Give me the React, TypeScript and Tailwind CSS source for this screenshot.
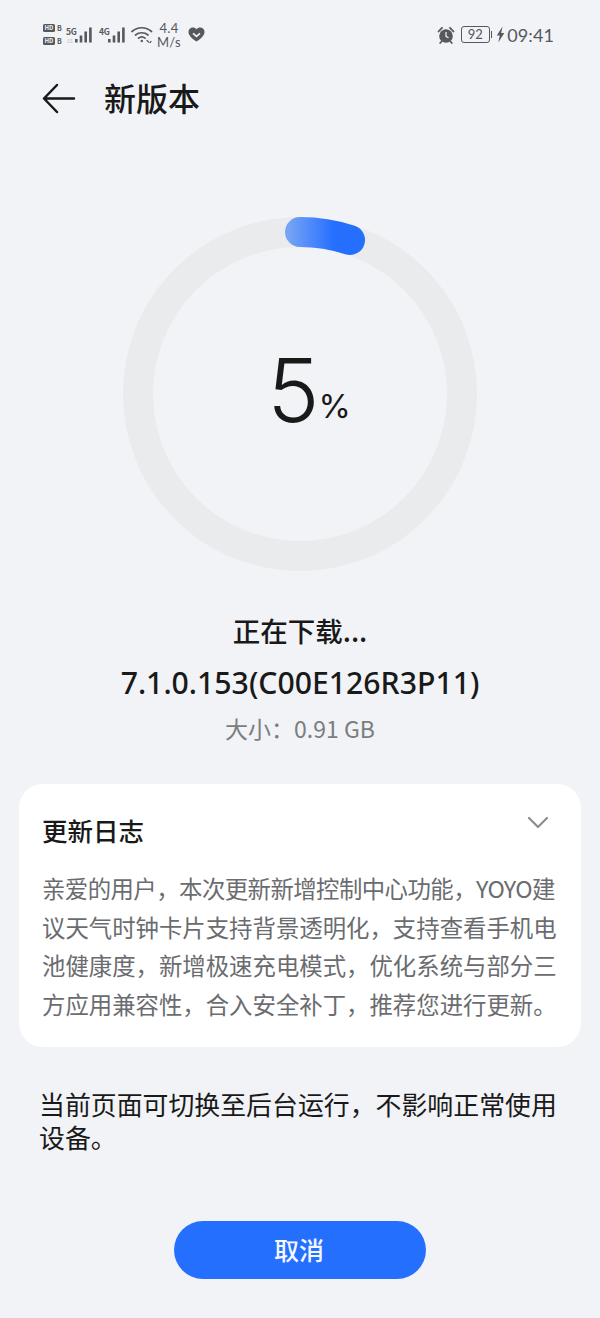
const font = "font-['Noto_Sans_CJK_SC','Noto_Sans',sans-serif]";

function Bars() {
  return (
    <g fill="#55585c">
      <rect x={0} y={12} width={2.6} height={3.5} />
      <rect x={4.7} y={8.5} width={2.6} height={7} />
      <rect x={9.4} y={4.5} width={2.6} height={11} />
      <rect x={14.1} y={0.5} width={2.6} height={15} />
    </g>
  );
}

function HdLine() {
  return (
    <div className="flex items-center gap-[2px]">
      <span className="flex h-[8px] w-[12px] items-center justify-center rounded-[1.5px] bg-[#55585c] text-[6px] leading-none font-bold text-[#f1f3f7]">
        HD
      </span>
      <span className="text-[7px] leading-none font-bold text-[#55585c]">B</span>
    </div>
  );
}

function StatusBar() {
  return (
    <div className="flex h-[69px] items-center justify-between pr-[46px] pl-[43px] text-[#55585c]">
      <div className="flex items-center">
        <div className="flex w-[20px] flex-col gap-[5px]">
          <HdLine />
          <HdLine />
        </div>
        <div className="relative ml-[3px] h-[16px] w-[27px]">
          <span className="absolute top-0 left-0 text-[8.5px] leading-none font-bold tracking-[-0.3px]">5G</span>
          <span className="absolute top-[11px] left-[1px] text-[5px] leading-none text-[#b5b7ba]">1S</span>
          <svg className="absolute top-0 left-[9px]" width="17" height="16" viewBox="0 0 17 16">
            <Bars />
          </svg>
        </div>
        <div className="relative ml-[6px] h-[16px] w-[27px]">
          <span className="absolute top-0 left-0 text-[8.5px] leading-none font-bold tracking-[-0.3px]">4G</span>
          <svg className="absolute top-0 left-[9px]" width="17" height="16" viewBox="0 0 17 16">
            <Bars />
          </svg>
        </div>
        <svg className="ml-[5px]" width="22" height="18" viewBox="0 0 22 18" fill="none" stroke="#55585c" strokeWidth="1.7" strokeLinecap="round">
          <path d="M1 5.5C6.5 0.5 15 0.5 20.5 5.5" />
          <path d="M4.5 9C8 6 13.5 6 17 9" />
          <path d="M7.5 12.2C9.5 10.6 12 10.6 14 12.2" />
          <circle cx="10.8" cy="15" r="1.2" fill="#55585c" stroke="none" />
          <path d="M16 14.5l1.5 1.5M19 16.5l1 -1" strokeWidth="1.2" />
        </svg>
        <div className="ml-[4px] flex w-[24px] flex-col items-center font-['Lato',sans-serif] text-[13px] leading-[14px] tracking-[0.3px]">
          <span>4.4</span>
          <span>M/s</span>
        </div>
        <svg className="ml-[7px]" width="17" height="15" viewBox="0 0 17 15">
          <path d="M8.5 14.5C3 11 0.5 8 0.5 4.8 0.5 2.2 2.5 0.5 4.8 0.5c1.5 0 2.8 0.6 3.7 1.8C9.4 1.100 10.700 0.5 12.200 0.5c2.300 0 4.300 1.700 4.300 4.300 0 3.200-2.500 6.200-8 9.700z" fill="#55585c" />
          <path d="M5 6.300l3.500 3 3.500-3" fill="none" stroke="#f1f3f7" strokeWidth="1.700" />
        </svg>
      </div>
      <div className="flex items-center">
        <svg width="18" height="18" viewBox="0 0 18 18">
          <circle cx="9" cy="10" r="6.800" fill="#55585c" />
          <path d="M1.500 5.500L5 1.800M16.500 5.500L13 1.800M4.500 15.500L3.200 17M13.500 15.500L14.800 17" stroke="#55585c" strokeWidth="1.800" strokeLinecap="round" />
          <path d="M9 6v4.300l2.500 1.500" fill="none" stroke="#f1f3f7" strokeWidth="1.200" />
        </svg>
        <div className="ml-[6px] flex h-[17px] w-[29px] items-center justify-center rounded-[3px] border border-[#55585c] font-['Lato',sans-serif] text-[13px] leading-none">
          92
        </div>
        <div className="ml-[1px] h-[7px] w-[1.500px] bg-[#55585c]" />
        <svg className="ml-[4px]" width="9" height="17" viewBox="0 0 9 17">
          <path d="M6.500 0.500L0.800 9.500H3.800L2.300 16.500L8.300 7H5.200Z" fill="#55585c" />
        </svg>
        <span className="ml-[2px] font-['Lato',sans-serif] text-[18px] leading-none tracking-[0.1px]">09:41</span>
      </div>
    </div>
  );
}

function ProgressRing() {
  return (
    <div className="relative mx-auto h-[356px] w-[356px]">
      <svg width="356" height="356" viewBox="0 0 356 356" fill="none">
        <defs>
          <linearGradient id="arc" gradientUnits="userSpaceOnUse" x1="162" y1="0" x2="212" y2="0">
            <stop offset="0" stopColor="#7ea8f4" />
            <stop offset="1" stopColor="#256fff" />
          </linearGradient>
        </defs>
        <circle cx="178" cy="178" r="162" stroke="#e9ebed" strokeWidth="30" />
        <path d="M178 16A162 162 0 0 1 228 24" stroke="url(#arc)" strokeWidth="30" strokeLinecap="round" />
      </svg>
      <div className="absolute inset-0 flex items-center justify-center pb-[8px] pl-[18px] font-['Inter',sans-serif] text-[#191919]">
        <span className="text-[88px] leading-none font-[350]">5</span>
        <span className="mt-[32px] ml-[-1px] text-[33px] leading-none font-normal">%</span>
      </div>
    </div>
  );
}

export default function App() {
  return (
    <div className={`${font} flex h-[1318px] w-[600px] flex-col overflow-hidden bg-[#f1f3f7]`}>
      <StatusBar />
      <div className="flex h-[60px] items-center pl-[42px]">
        <svg width="34" height="32" viewBox="0 0 34 32" fill="none" stroke="#191919" strokeWidth="2.500" strokeLinecap="round" strokeLinejoin="round">
          <path d="M32 15.500H2M15 2L2 15.500 15 29" />
        </svg>
        <span className="mb-[4px] ml-[28px] text-[32px] leading-none font-medium text-[#191919]">新版本</span>
      </div>
      <div className="mt-[87px]">
        <ProgressRing />
      </div>
      <div className="mt-[38px] flex flex-col items-center text-center">
        <p className="text-[27.500px] leading-[40px] font-medium text-[#191919]">正在下载...</p>
        <p className="mt-[13px] font-['Noto_Sans',sans-serif] text-[30.200px] leading-[40px] font-medium text-[#191919]">7.1.0.153(C00E126R3P11)</p>
        <p className="mt-[9px] text-[23px] leading-[32px] text-[#7b7d80]">大小：0.91 GB</p>
      </div>
      <div className="mx-[19px] mt-[40px] h-[263px] rounded-[24px] bg-white pt-[26px] pr-[24px] pl-[23px]">
        <div className="flex items-start justify-between">
          <span className="text-[25.500px] leading-[40px] font-medium text-[#191919]">更新日志</span>
          <svg className="mt-[6px] mr-[8px]" width="22" height="14" viewBox="0 0 22 14" fill="none" stroke="#8b8d90" strokeWidth="2.200" strokeLinecap="round" strokeLinejoin="round">
            <path d="M2 2l9 9 9-9" />
          </svg>
        </div>
        <p className="mt-[19px] text-[23.400px] leading-[38.500px] whitespace-nowrap text-[#6a6c6f]">
          <span className="block tracking-[-0.55px]">亲爱的用户，本次更新新增控制中心功能，YOYO建</span>
          <span className="block">议天气时钟卡片支持背景透明化，支持查看手机电</span>
          <span className="block">池健康度，新增极速充电模式，优化系统与部分三</span>
          <span className="block">方应用兼容性，合入安全补丁，推荐您进行更新。</span>
        </p>
      </div>
      <p className="mt-[40px] mr-[36px] ml-[39px] text-[25.900px] leading-[33px] text-[#191919]">
        当前页面可切换至后台运行，不影响正常使用设备。
      </p>
      <div className="mt-[68px] flex justify-center">
        <button className="h-[58px] w-[252px] rounded-full bg-[#256fff] pr-[2px] text-[25px] font-medium text-[#f4f7ff]">取消</button>
      </div>
    </div>
  );
}
